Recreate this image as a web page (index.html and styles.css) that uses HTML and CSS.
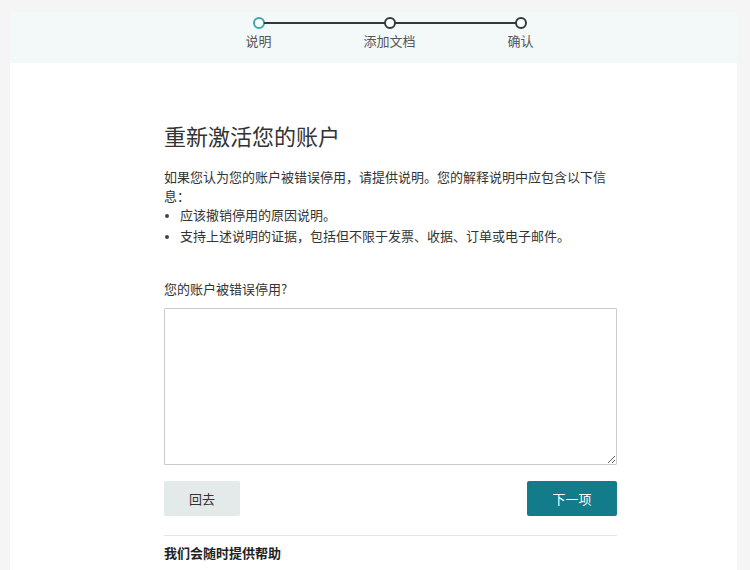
FILE: index.html
```html
<!DOCTYPE html>
<html lang="zh">
<head>
<meta charset="utf-8">
<title>重新激活您的账户</title>
<link rel="stylesheet" href="styles.css">
</head>
<body>
<div class="card">
  <div class="header">
    <ol class="stepper">
      <li class="step active"><span class="dot"></span><span class="label">说明</span></li>
      <li class="step"><span class="dot"></span><span class="label">添加文档</span></li>
      <li class="step"><span class="dot"></span><span class="label">确认</span></li>
    </ol>
  </div>
  <div class="content">
    <h1 class="title">重新激活您的账户</h1>
    <p class="intro">如果您认为您的账户被错误停用，请提供说明。您的解释说明中应包含以下信息：</p>
    <ul class="reasons">
      <li>应该撤销停用的原因说明。</li>
      <li>支持上述说明的证据，包括但不限于发票、收据、订单或电子邮件。</li>
    </ul>
    <label class="field-label" for="reason">您的账户被错误停用?</label>
    <textarea id="reason" class="field"></textarea>
    <div class="actions">
      <button class="btn btn-back">回去</button>
      <button class="btn btn-next">下一项</button>
    </div>
    <hr class="divider">
    <h2 class="help">我们会随时提供帮助</h2>
  </div>
</div>
</body>
</html>
```
FILE: styles.css
```css
* { box-sizing: border-box; }
html, body { height: 100%; }
body {
  margin: 0;
  background: #f5f5f5;
  font-family: "Noto Sans CJK SC", "Noto Sans", sans-serif;
  color: #333;
  overflow: hidden;
}
.card {
  margin: 12px 13px 0 10px;
  background: #fff;
  min-height: 600px;
}
.header {
  height: 51px;
  background: #f3f8f9;
  padding-top: 5px;
}
.stepper {
  list-style: none;
  margin: 0 0 0 183px;
  padding: 0;
  display: grid;
  grid-template-columns: repeat(3, 131px);
}
.step {
  position: relative;
  display: flex;
  flex-direction: column;
  align-items: center;
}
.step:not(:last-child)::after {
  content: "";
  position: absolute;
  top: 5px;
  left: calc(50% + 5px);
  width: calc(100% - 10px);
  height: 2px;
  background: #2d3b3b;
}
.dot {
  width: 12px;
  height: 12px;
  border-radius: 50%;
  border: 2px solid #2d3b3b;
  background: #fff;
}
.step.active .dot { border-color: #3aa9ad; }
.label {
  margin-top: 3px;
  font-size: 13px;
  line-height: 17px;
  color: #555;
}
.content {
  width: 453px;
  margin-left: 154px;
  padding-top: 57px;
}
.title {
  margin: 0;
  font-size: 22px;
  font-weight: 400;
  line-height: 30px;
  color: #333;
}
.intro {
  margin: 17px 0 0;
  font-size: 13px;
  line-height: 19px;
  color: #333;
}
.reasons {
  margin: 0;
  padding-left: 16px;
  font-size: 13px;
  line-height: 19px;
}
.reasons li::marker { font-size: 10px; color: #444; }
.reasons li + li { margin-top: 2px; }
.field-label {
  display: block;
  margin-top: 34px;
  font-size: 13px;
  line-height: 19px;
  color: #333;
}
.field {
  display: block;
  margin-top: 10px;
  width: 453px;
  height: 157px;
  border: 1px solid #c9cccd;
  border-radius: 1px;
  resize: vertical;
  font-family: inherit;
}
.actions {
  display: flex;
  justify-content: space-between;
  margin-top: 16px;
}
.btn {
  height: 35px;
  border: none;
  border-radius: 2px;
  font-family: inherit;
  font-size: 13px;
}
.btn-back {
  width: 76px;
  background: #e4e9ea;
  color: #333;
}
.btn-next {
  width: 90px;
  background: #127c8b;
  color: #fff;
}
.divider {
  margin: 19px 0 0;
  border: none;
  border-top: 1px solid #e3e3e3;
}
.help {
  margin: 7px 0 0;
  font-size: 13px;
  font-weight: 700;
  line-height: 19px;
  color: #222;
}
```
